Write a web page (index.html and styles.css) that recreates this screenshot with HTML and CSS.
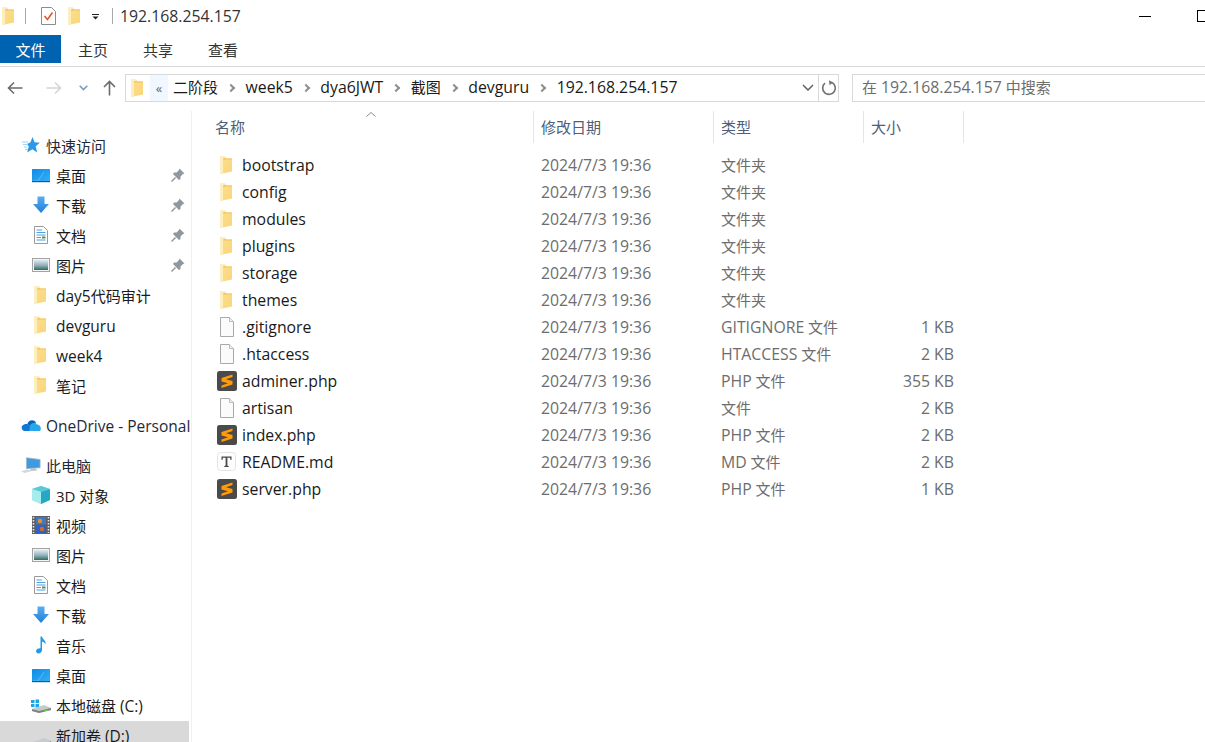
FILE: index.html
```html
<!DOCTYPE html>
<html>
<head>
<meta charset="utf-8">
<title>192.168.254.157</title>
<link rel="stylesheet" href="styles.css">
</head>
<body>

<!-- 图标 -->
<svg class="defs" width="0" height="0">
	<defs>
		<linearGradient id="gFolder" x1="0" y1="0" x2="1" y2="1">
			<stop offset="0" stop-color="#fbe08f"/>
			<stop offset="1" stop-color="#fad57a"/>
		</linearGradient>
		<linearGradient id="gBlue" x1="0" y1="0" x2="0" y2="1">
			<stop offset="0" stop-color="#5aaef0"/>
			<stop offset="1" stop-color="#1f7fd8"/>
		</linearGradient>
		<linearGradient id="gScreen" x1="0" y1="0" x2="1" y2="1">
			<stop offset="0" stop-color="#0f8be6"/>
			<stop offset="1" stop-color="#35b0f5"/>
		</linearGradient>
		<linearGradient id="gSky" x1="0" y1="0" x2="0" y2="1">
			<stop offset="0" stop-color="#dfeaf2"/>
			<stop offset="0.55" stop-color="#8fb0b8"/>
			<stop offset="1" stop-color="#2f6a5c"/>
		</linearGradient>
		<symbol id="folder" viewBox="0 0 20 18">
			<path d="M3 .5 H8 L9 2.5 H15 V15.5 L3 18 Z" fill="url(#gFolder)"/>
			<path d="M3 .5 H8 L8.6 1.7 L6 2.5 V17.3 L3 18 Z" fill="#fdeec0"/>
			<path d="M6 2.5 L8.6 1.7 L9 2.5 H15 V3.5 H6 Z" fill="#f2c55c"/>
		</symbol>
		<symbol id="blank" viewBox="0 0 20 20">
			<path d="M3.5 .5 H12.5 L16.5 4.5 V19.5 H3.5 Z" fill="#fbfbfb" stroke="#a9a9a9"/>
			<path d="M12.5 .5 V4.5 H16.5" fill="#f0f0f0" stroke="#bcbcbc"/>
		</symbol>
		<symbol id="sublime" viewBox="0 0 20 20">
			<rect width="20" height="20" rx="2.5" fill="#4a4a4a"/>
			<path d="M15.5 3.5 L4.5 7 V10.5 L11 12.2 L4.5 14.5 V17 L15.5 13.5 V10 L9 8.2 L15.5 6 Z" fill="#ff9a0a"/>
		</symbol>
		<symbol id="textdoc" viewBox="0 0 20 20">
			<rect x=".5" y=".5" width="18" height="18" rx="3" fill="#fdfdfd" stroke="#e4e4e4"/>
			<path d="M4.5 4.5 H14.5 V8 H13.6 L13 5.7 H10.4 V13.6 L11.8 14.2 V15 H7.2 V14.2 L8.6 13.6 V5.7 H6 L5.4 8 H4.5 Z" fill="#4a4a4a"/>
		</symbol>
		<symbol id="star" viewBox="-1 0 20 18">
			<path d="M10.5 1 L12.6 6.3 L17.8 6.8 L13.7 10.2 L15.2 16.5 L10.3 13.2 L5.2 16.5 L6.8 10.3 L4.5 8.3 L8.5 6.3 Z" fill="#2a9ae8"/>
			<path d="M0 6 H6 M1 8.5 H6 M2 11 H5 M3 13.5 H6" stroke="#9fd2f4" stroke-width="1"/>
		</symbol>
		<symbol id="desktop" viewBox="-1 -3 20 18">
			<rect width="18" height="13" rx=".5" fill="url(#gScreen)"/>
			<path d="M1 12 L6 12 L12 3" stroke="#7fcdf8" stroke-width=".6" fill="none"/>
			<rect y="12" width="18" height="1.2" fill="#0a5fa8"/>
		</symbol>
		<symbol id="download" viewBox="-1 0 20 18">
			<path d="M5.5 .5 H12.5 V8 H17 L9 17 L1 8 H5.5 Z" fill="url(#gBlue)"/>
		</symbol>
		<symbol id="doc" viewBox="-2 0 20 18">
			<path d="M1.5 .5 H10.5 L14.5 4.5 V17.5 H1.5 Z" fill="#fff" stroke="#9a9a9a"/>
			<path d="M3.5 4 H9 M3.5 6.5 H12.5 M3.5 9 H12.5 M3.5 11.5 H8 M3.5 14 H12.5" stroke="#4da0e0" stroke-width="1"/>
			<rect x="9" y="10.5" width="3.5" height="2" fill="#4d8f6a"/>
		</symbol>
		<symbol id="picture" viewBox="-1 -2 20 18">
			<rect x=".5" y=".5" width="17" height="13" fill="#f4f4f4" stroke="#a3a3a3"/>
			<rect x="2" y="2" width="14" height="10" fill="url(#gSky)"/>
		</symbol>
		<symbol id="onedrive" viewBox="0 -2 22 18">
			<path d="M7 6 C8 1.5 14 0 16.5 4.5 L11 9 Z" fill="#0364b8"/>
			<path d="M4 13.5 C0 13 -.5 7.5 3.5 6.5 C5.5 5.5 8 6 9.5 7.5 L14 13.5 Z" fill="#0f78d4"/>
			<path d="M10 7.5 C12 4 16 3.5 17.5 6.5 C21 6.5 23 10.5 21 13.5 H9 Z" fill="#28a8ea"/>
		</symbol>
		<symbol id="computer" viewBox="0 0 22 18">
			<path d="M6 1 L21 3 V12 L6 13 Z" fill="#3f9be0" stroke="#9db4c4" stroke-width=".8"/>
			<path d="M11 13 L16 12.5 L18 15 L9 15.5 Z" fill="#b9c4cc"/>
			<path d="M0 16 L7 14 L12 15.5 L4 17.8 Z" fill="#d4d8db"/>
		</symbol>
		<symbol id="cube" viewBox="-1 0 20 18">
			<path d="M9 0 L18 3 V14 L9 18 L0 14 V3 Z" fill="#7fdde0"/>
			<path d="M0 3 L9 6 L18 3 L9 0 Z" fill="#5ac8d8"/>
			<path d="M0 3 L9 6 V18 L0 14 Z" fill="#a6ecec"/>
			<path d="M9 6 L18 3 V14 L9 18 Z" fill="#28a7c4"/>
		</symbol>
		<symbol id="film" viewBox="-1 0 20 18">
			<rect width="18" height="18" fill="#5f5f5f"/>
			<path d="M1.5 1 V17 M16.5 1 V17" stroke="#e8e8e8" stroke-width="1.6" stroke-dasharray="1.6 1.4"/>
			<rect x="4" y="1" width="10" height="7.5" fill="#3f78c8"/>
			<rect x="4" y="9.5" width="10" height="7.5" fill="#2f62c0"/>
			<circle cx="8" cy="5" r="2.2" fill="#e8902a"/>
			<circle cx="10" cy="13" r="2.2" fill="#d8682a"/>
		</symbol>
		<symbol id="music" viewBox="-4 0 20 18">
			<path d="M5.5 .5 H7 C7.5 3.5 11.5 4.5 10.5 8.5 C10 6.5 8.5 6 7 5.5 V14 C7 17 3.5 18 2 17 C0 15.5 1.5 12 5.5 12.3 Z" fill="#1c9be6"/>
		</symbol>
		<symbol id="pin" viewBox="0 0 14 14">
			<path d="M8.5 .5 L13.5 5.5 L12 6 L9.5 8.5 L9.5 11 L8 12 L2 6 L3 4.5 L5.5 4.5 L8 2 Z" fill="#8f979f"/>
			<path d="M4.5 9.5 L.5 13.5" stroke="#8f979f" stroke-width="1.4"/>
		</symbol>
		<symbol id="drivec" viewBox="0 -1 20 18">
			<path d="M0 3 H3.5 V6 H0 Z M4.5 2.4 H8 V6 H4.5 Z M0 7 H3.5 V10 H0 Z M4.5 7 H8 V10.6 H4.5 Z" fill="#19a7e8"/>
			<path d="M1 12 L13 8 L20 11 V13 L8 16 L1 14 Z" fill="#c6c9cb"/>
			<path d="M1 12 L8 14 L20 11 V13 L8 16 L1 14 Z" fill="#7d8183"/>
			<path d="M13 13.3 H17" stroke="#6bd34a" stroke-width="1"/>
		</symbol>
		<symbol id="drived" viewBox="-1 -11 20 18">
			<path d="M1 5 L12 1 L20 4 V6 L8 10 L1 7 Z" fill="#c9cccd"/>
			<path d="M1 5 L8 8 L20 4 V6 L8 10 L1 7 Z" fill="#6f7375"/>
		</symbol>
	</defs>
</svg>

<div class="titlebar">
	<svg class="ico-folder qat-first"><use href="#folder"/></svg>
	<span class="qat-sep"></span>
	<svg class="qat-doc" viewBox="0 0 15 18">
		<path d="M.5 .5 H10.5 L14.5 4.5 V17.5 H.5 Z" fill="#fdfdfd" stroke="#8c8c8c"/>
		<path d="M3.5 9 L6.5 12.5 L11.5 5.5" fill="none" stroke="#e8541e" stroke-width="1.5"/>
	</svg>
	<svg class="ico-folder qat-folder"><use href="#folder"/></svg>
	<svg class="qat-arrow" viewBox="0 0 7 6">
		<path d="M0 .5 H7" stroke="#222" stroke-width="1"/>
		<path d="M.5 2.5 H6.5 L3.5 5.5 Z" fill="#222"/>
	</svg>
	<span class="qat-sep qat-sep-2"></span>
	<span class="title-text en">192.168.254.157</span>
	<span class="win-min"></span>
	<span class="win-max"></span>
</div>

<div class="ribbon">
	<div class="tab tab-file">文件</div>
	<div class="tab">主页</div>
	<div class="tab">共享</div>
	<div class="tab">查看</div>
</div>

<div class="navbar">
	<div class="nav-buttons">
		<svg class="nav-back" viewBox="0 0 16 14"><path d="M15.5 7 H1.5 M7 1.5 L1.5 7 L7 12.5" fill="none" stroke="#6b6b6b" stroke-width="1.6"/></svg>
		<svg class="nav-forward" viewBox="0 0 16 14"><path d="M.5 7 H14.5 M9 1.5 L14.5 7 L9 12.5" fill="none" stroke="#d4d4d4" stroke-width="1.6"/></svg>
		<svg class="nav-recent" viewBox="0 0 9 6"><path d="M.7 .7 L4.5 4.5 L8.3 .7" fill="none" stroke="#7a9cc0" stroke-width="1.6"/></svg>
		<svg class="nav-up" viewBox="0 0 13 16"><path d="M6.5 15.5 V1.5 M1 7 L6.5 1.5 L12 7" fill="none" stroke="#6b6b6b" stroke-width="1.6"/></svg>
	</div>
	<div class="address">
		<svg class="ico-folder addr-folder"><use href="#folder"/></svg>
		<span class="addr-more">«</span>
		<div class="crumbs">
			<span>二阶段</span><i class="crumb-sep"></i>
			<span class="en">week5</span><i class="crumb-sep"></i>
			<span class="en">dya6JWT</span><i class="crumb-sep"></i>
			<span>截图</span><i class="crumb-sep"></i>
			<span class="en">devguru</span><i class="crumb-sep"></i>
			<span class="en">192.168.254.157</span>
		</div>
		<svg class="addr-drop" viewBox="0 0 12 7"><path d="M1 1 L6 6 L11 1" fill="none" stroke="#606060" stroke-width="1.5"/></svg>
		<div class="addr-refresh">
			<svg viewBox="0 0 16 16"><path d="M10.5 2.3 A6.3 6.3 0 1 1 4 3.2" fill="none" stroke="#707070" stroke-width="1.6"/><path d="M8 .2 L12 2.4 L8.6 5.2 Z" fill="#707070"/></svg>
		</div>
	</div>
	<div class="search"><span>在 <span class="en">192.168.254.157</span> 中搜索</span></div>
</div>

<div class="content">
	<nav class="sidebar">
		<div class="side-row top"><svg class="side-ico"><use href="#star"/></svg>快速访问</div>
		<div class="side-row"><svg class="side-ico"><use href="#desktop"/></svg>桌面<svg class="pin"><use href="#pin"/></svg></div>
		<div class="side-row"><svg class="side-ico"><use href="#download"/></svg>下载<svg class="pin"><use href="#pin"/></svg></div>
		<div class="side-row"><svg class="side-ico"><use href="#doc"/></svg>文档<svg class="pin"><use href="#pin"/></svg></div>
		<div class="side-row"><svg class="side-ico"><use href="#picture"/></svg>图片<svg class="pin"><use href="#pin"/></svg></div>
		<div class="side-row"><svg class="side-ico"><use href="#folder"/></svg><span><span class="en">day5</span>代码审计</span></div>
		<div class="side-row"><svg class="side-ico"><use href="#folder"/></svg><span class="en">devguru</span></div>
		<div class="side-row"><svg class="side-ico"><use href="#folder"/></svg><span class="en">week4</span></div>
		<div class="side-row"><svg class="side-ico"><use href="#folder"/></svg>笔记</div>

		<div class="side-row top group"><svg class="side-ico"><use href="#onedrive"/></svg><span class="en">OneDrive - Personal</span></div>

		<div class="side-row top group"><svg class="side-ico"><use href="#computer"/></svg>此电脑</div>
		<div class="side-row"><svg class="side-ico"><use href="#cube"/></svg>3D 对象</div>
		<div class="side-row"><svg class="side-ico"><use href="#film"/></svg>视频</div>
		<div class="side-row"><svg class="side-ico"><use href="#picture"/></svg>图片</div>
		<div class="side-row"><svg class="side-ico"><use href="#doc"/></svg>文档</div>
		<div class="side-row"><svg class="side-ico"><use href="#download"/></svg>下载</div>
		<div class="side-row"><svg class="side-ico"><use href="#music"/></svg>音乐</div>
		<div class="side-row"><svg class="side-ico"><use href="#desktop"/></svg>桌面</div>
		<div class="side-row"><svg class="side-ico"><use href="#drivec"/></svg><span>本地磁盘 <span class="en">(C:)</span></span></div>
		<div class="side-row selected"><svg class="side-ico"><use href="#drived"/></svg><span>新加卷 <span class="en">(D:)</span></span></div>
	</nav>

	<main class="files">
		<div class="file-head">
			<div class="head-cell head-name">名称<svg class="sort-caret" viewBox="0 0 10 5"><path d="M.5 4.5 L5 .5 L9.5 4.5" fill="none" stroke="#8a8a8a"/></svg></div>
			<div class="head-cell">修改日期</div>
			<div class="head-cell">类型</div>
			<div class="head-cell">大小</div>
		</div>
		<div class="file-list">
			<div class="file-row"><div class="file-name"><svg class="file-ico"><use href="#folder"/></svg>bootstrap</div><div class="cell">2024/7/3 19:36</div><div class="cell">文件夹</div><div class="cell size"></div></div>
			<div class="file-row"><div class="file-name"><svg class="file-ico"><use href="#folder"/></svg>config</div><div class="cell">2024/7/3 19:36</div><div class="cell">文件夹</div><div class="cell size"></div></div>
			<div class="file-row"><div class="file-name"><svg class="file-ico"><use href="#folder"/></svg>modules</div><div class="cell">2024/7/3 19:36</div><div class="cell">文件夹</div><div class="cell size"></div></div>
			<div class="file-row"><div class="file-name"><svg class="file-ico"><use href="#folder"/></svg>plugins</div><div class="cell">2024/7/3 19:36</div><div class="cell">文件夹</div><div class="cell size"></div></div>
			<div class="file-row"><div class="file-name"><svg class="file-ico"><use href="#folder"/></svg>storage</div><div class="cell">2024/7/3 19:36</div><div class="cell">文件夹</div><div class="cell size"></div></div>
			<div class="file-row"><div class="file-name"><svg class="file-ico"><use href="#folder"/></svg>themes</div><div class="cell">2024/7/3 19:36</div><div class="cell">文件夹</div><div class="cell size"></div></div>
			<div class="file-row"><div class="file-name"><svg class="file-ico"><use href="#blank"/></svg>.gitignore</div><div class="cell">2024/7/3 19:36</div><div class="cell"><span class="en">GITIGNORE</span> 文件</div><div class="cell size">1 KB</div></div>
			<div class="file-row"><div class="file-name"><svg class="file-ico"><use href="#blank"/></svg>.htaccess</div><div class="cell">2024/7/3 19:36</div><div class="cell"><span class="en">HTACCESS</span> 文件</div><div class="cell size">2 KB</div></div>
			<div class="file-row"><div class="file-name"><svg class="file-ico"><use href="#sublime"/></svg>adminer.php</div><div class="cell">2024/7/3 19:36</div><div class="cell"><span class="en">PHP</span> 文件</div><div class="cell size">355 KB</div></div>
			<div class="file-row"><div class="file-name"><svg class="file-ico"><use href="#blank"/></svg>artisan</div><div class="cell">2024/7/3 19:36</div><div class="cell">文件</div><div class="cell size">2 KB</div></div>
			<div class="file-row"><div class="file-name"><svg class="file-ico"><use href="#sublime"/></svg>index.php</div><div class="cell">2024/7/3 19:36</div><div class="cell"><span class="en">PHP</span> 文件</div><div class="cell size">2 KB</div></div>
			<div class="file-row"><div class="file-name"><svg class="file-ico"><use href="#textdoc"/></svg>README.md</div><div class="cell">2024/7/3 19:36</div><div class="cell"><span class="en">MD</span> 文件</div><div class="cell size">2 KB</div></div>
			<div class="file-row"><div class="file-name"><svg class="file-ico"><use href="#sublime"/></svg>server.php</div><div class="cell">2024/7/3 19:36</div><div class="cell"><span class="en">PHP</span> 文件</div><div class="cell size">1 KB</div></div>
		</div>
	</main>
</div>

</body>
</html>
```

FILE: styles.css
```css
* {
	box-sizing: border-box;
}
html, body {
	height: 100%;
}
body {
	margin: 0;
	height: 742px;
	overflow: hidden;
	background-color: white;
	color: #1a1a1a;
	font-family: "Open Sans", "Noto Sans CJK SC", sans-serif;
	font-size: 15px;
}
.defs {
	display: block;
	height: 0;
}
svg {
	display: block;
	flex: none;
}
.en {
	font-size: 15.8px;
}

/* 标题栏 */
.titlebar {
	display: flex;
	align-items: center;
	height: 35px;
	padding-bottom: 3px;
}
.ico-folder {
	width: 20px;
	height: 18px;
}
.qat-first {
	margin-left: -1px;
}
.qat-sep {
	width: 1px;
	height: 16px;
	margin-left: 6px;
	background-color: #a8a8a8;
}
.qat-doc {
	width: 15px;
	height: 18px;
	margin-left: 15px;
}
.qat-folder {
	margin-left: 9px;
}
.qat-arrow {
	width: 7px;
	height: 6px;
	margin-left: 7px;
	margin-top: 2px;
}
.qat-sep-2 {
	margin-left: 13px;
}
.title-text {
	margin-left: 7px;
	color: #333;
}
.win-min {
	width: 12px;
	height: 1px;
	margin-left: auto;
	background-color: black;
}
.win-max {
	width: 12px;
	height: 12px;
	margin-left: 46px;
	margin-right: -4px;
	border: 1px solid black;
}

/* 选项卡 */
.ribbon {
	display: flex;
	height: 32px;
	border-bottom: 1px solid #d9d9d9;
	padding-bottom: 3px;
}
.tab {
	width: 65px;
	height: 28px;
	padding-right: 1px;
	line-height: 30px;
	text-align: center;
	color: #333;
}
.tab-file {
	width: 61px;
	padding-right: 0;
	background-color: #0063b1;
	color: white;
}

/* 地址栏 */
.navbar {
	display: flex;
	align-items: center;
	height: 44px;
	padding-bottom: 3px;
}
.nav-buttons {
	display: flex;
	align-items: center;
	width: 125px;
	flex: none;
}
.nav-back {
	width: 16px;
	height: 14px;
	margin-left: 7px;
}
.nav-forward {
	width: 16px;
	height: 14px;
	margin-left: 23px;
}
.nav-recent {
	width: 9px;
	height: 6px;
	margin-left: 17px;
}
.nav-up {
	width: 13px;
	height: 16px;
	margin-left: 15px;
}
.address {
	display: flex;
	align-items: center;
	width: 714px;
	height: 28px;
	border: 1px solid #d9d9d9;
	flex: none;
}
.addr-folder {
	margin-left: 2px;
}
.addr-more {
	display: flex;
	align-items: center;
	justify-content: center;
	width: 18px;
	height: 100%;
	margin-left: 2px;
	background-color: #f0f7fe;
	color: #666;
	font-size: 13px;
}
.crumbs {
	display: flex;
	align-items: center;
	margin-left: 5px;
	padding-bottom: 2px;
	color: #1a1a1a;
}
.crumb-sep {
	width: 6px;
	height: 6px;
	margin: 2px 11.5px 0 10px;
	border-top: 2px solid #8f8f8f;
	border-right: 2px solid #8f8f8f;
	transform: rotate(45deg);
}
.addr-drop {
	width: 12px;
	height: 7px;
	margin-left: auto;
	margin-right: 4px;
}
.addr-refresh {
	display: flex;
	align-items: center;
	justify-content: center;
	width: 20px;
	height: 100%;
	border-left: 1px solid #d9d9d9;
}
.addr-refresh svg {
	width: 16px;
	height: 16px;
}
.search {
	display: flex;
	align-items: center;
	flex: none;
	width: 370px;
	height: 28px;
	margin-left: 13px;
	padding-left: 9px;
	padding-bottom: 2px;
	border: 1px solid #d9d9d9;
	color: #6d6d6d;
}

/* 导航窗格 */
.content {
	display: flex;
	height: 631px;
}
.sidebar {
	width: 192px;
	flex: none;
	padding-top: 20px;
	border-right: 1px solid #f0f0f0;
	overflow: hidden;
}
.sidebar .en {
	font-size: 15.5px;
}
.side-row {
	display: flex;
	align-items: center;
	height: 30px;
	margin-right: 2px;
	padding-left: 31px;
	padding-bottom: 2px;
	white-space: nowrap;
	color: #1a1a1a;
}
.side-row > span {
	margin-top: 2px;
}
.side-row.top {
	padding-left: 21px;
	color: #1f2a38;
}
.side-row.group {
	margin-top: 10px;
}
.side-row.selected {
	background-color: #d9d9d9;
}
.side-ico {
	width: 20px;
	height: 18px;
	margin-right: 5px;
}
.pin {
	width: 14px;
	height: 14px;
	margin-left: auto;
	margin-right: 4px;
}

/* 文件列表 */
.files {
	flex: 1;
	min-width: 0;
	--columns: 342px 180px 150px 100px;
}
.file-head, .file-row {
	display: grid;
	grid-template-columns: var(--columns);
}
.file-head {
	height: 32px;
}
.head-cell {
	display: flex;
	align-items: center;
	padding-left: 7px;
	padding-bottom: 2px;
	border-right: 1px solid #e5e5e5;
	color: #4c607a;
}
.head-name {
	position: relative;
	padding-left: 23px;
}
.sort-caret {
	position: absolute;
	top: 1px;
	left: 174px;
	width: 10px;
	height: 5px;
}
.file-list {
	padding-top: 9px;
}
.file-row {
	height: 27px;
	align-items: center;
	padding-bottom: 2px;
}
.file-name {
	display: flex;
	align-items: center;
	padding-left: 25px;
	font-size: 15.8px;
	white-space: nowrap;
}
.file-ico {
	width: 20px;
	height: 20px;
	margin-right: 5px;
}
.cell {
	padding-left: 7px;
	color: #6d6d6d;
	font-size: 15px;
	white-space: nowrap;
}
.file-row > .cell:nth-child(2), .cell.size {
	font-size: 15.8px;
}
.cell.size {
	padding-left: 0;
	padding-right: 10px;
	text-align: right;
}
```
